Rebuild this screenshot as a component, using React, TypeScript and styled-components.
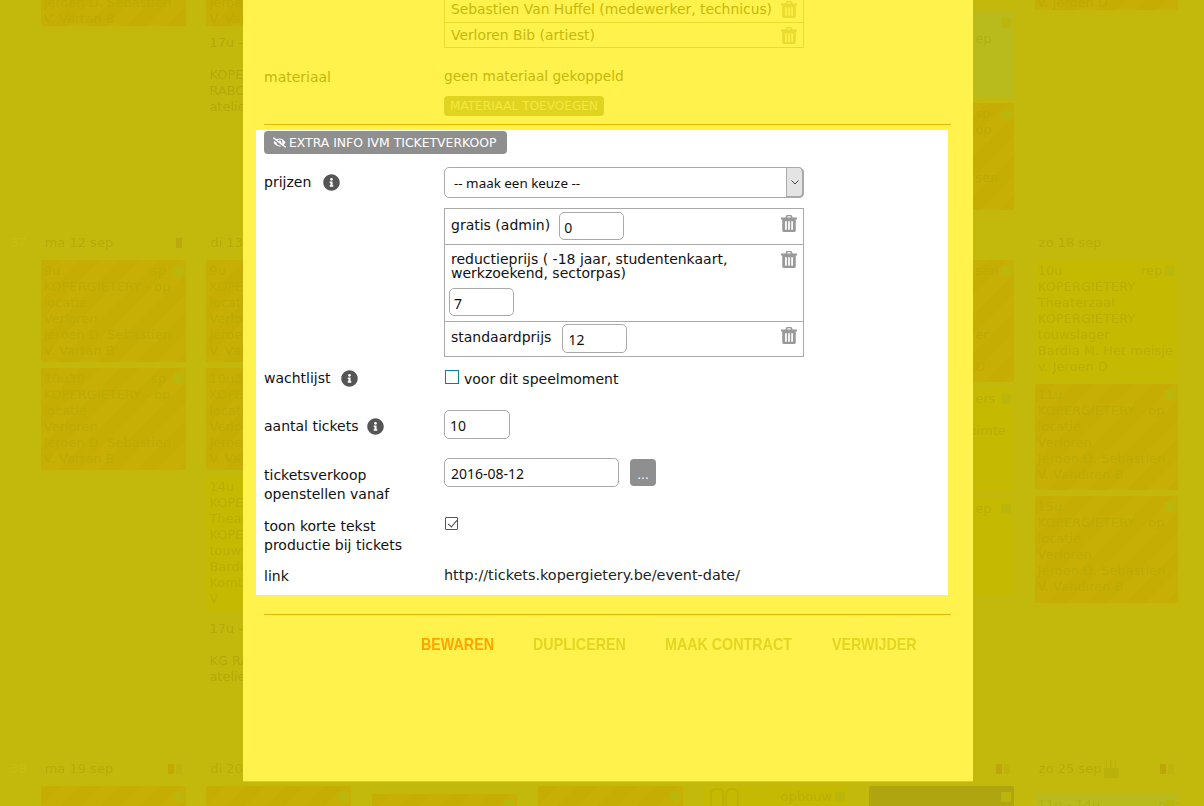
import React from "react";
import styled, { createGlobalStyle } from "styled-components";
import { FaEyeSlash, FaInfoCircle } from "react-icons/fa";

const Global = createGlobalStyle`
  html, body { margin: 0; padding: 0; height: 100%; overflow: hidden; background: #c3b90c; }
  body { font-family: "DejaVu Sans", Verdana, sans-serif; font-size: 14px; }
  * { box-sizing: border-box; }
`;

const Page = styled.div`
  position: relative;
  width: 1204px;
  height: 806px;
  overflow: hidden;
  background: #c3b90c;
`;

/* ---------- dimmed calendar behind the dialog ---------- */
const Calendar = styled.div`
  display: flex;
  flex-direction: column;
  margin-top: -8px;
  color: #b5aa09;
  font-size: 13px;
  line-height: 16px;
`;

const Week = styled.section<{ $height: number }>`
  display: grid;
  grid-template-columns: 20px repeat(6, 145px) 143px;
  column-gap: 20.7px;
  height: ${(p) => p.$height}px;
  align-content: start;
`;

const WeekNo = styled.div`
  padding: 0 0 0 10px;
  color: #c8bd14;
  font-size: 13px;
  line-height: 22px;
  white-space: nowrap;
`;

const Day = styled.div`
  display: flex;
  flex-direction: column;
  min-width: 0;
`;

const DayHead = styled.div`
  display: flex;
  align-items: center;
  gap: 2px;
  height: 22px;
  padding: 0 4px;
  margin-bottom: 6px;
  color: #b6ab0a;
`;

const DayLabel = styled.span`
  flex: none;
  margin-right: auto;
  white-space: nowrap;
  filter: blur(0.3px);
`;

const Flag = styled.i<{ $c: string }>`
  display: block;
  width: 6px;
  height: 10px;
  background: ${(p) => p.$c};
`;

const Cutlery = styled.svg`
  flex: none;
  margin: 0 auto 0 -37px;
`;

const eventInk: Record<string, string> = {
  plain: "#b3a90a",
  orange: "#bcaa05",
  pale: "#b9ae04",
  green: "#aeb016",
  grey: "#a59c10",
};

const eventFill: Record<string, string> = {
  plain: "transparent",
  orange: "repeating-linear-gradient(135deg, #c6ad03 0 14px, #c7af05 14px 28px)",
  pale: "#c5b902",
  green: "#b9bb1c",
  grey: "#aea510",
};

const Event = styled.div<{ $h: number; $tone: string; $mt?: number }>`
  position: relative;
  height: ${(p) => p.$h}px;
  margin: ${(p) => p.$mt ?? 0}px 0 6px;
  padding: 3px 3px;
  border-radius: 2px;
  overflow: hidden;
  white-space: pre;
  color: ${(p) => eventInk[p.$tone]};
  background: ${(p) => eventFill[p.$tone]};
  & > span {
    display: block;
    filter: blur(0.6px);
  }
`;

const Dot = styled.b`
  position: absolute;
  top: 6px;
  right: 3px;
  width: 10px;
  height: 10px;
  background: #bbb60c;
`;

const Rings = styled.svg`
  position: absolute;
  top: 2px;
  left: 7px;
`;

const sp = (n: number) => " ".repeat(n);
const TXT = `9u${sp(22)}sp\nKOPERGIETERY - op\nlocatie\nVerloren\nJeroen D. Sebastien\nV. Vartan B`;
const TXT2 = `10u30${sp(16)}sp\nKOPERGIETERY - op\nlocatie\nVerloren\nJeroen D. Sebastien\nV. Vartan B`;

const Ev = ({
  h,
  tone,
  text,
  mt,
  dot = true,
  children,
}: {
  h: number;
  tone: string;
  text: string;
  mt?: number;
  dot?: boolean;
  children?: React.ReactNode;
}) => (
  <Event $h={h} $tone={tone} $mt={mt}>
    <span>{text}</span>
    {dot && <Dot />}
    {children}
  </Event>
);

const Background = () => (
  <Calendar>
    <Week $height={240}>
      <div />
      <Day>
        <Ev h={34} tone="orange" text={"Jeroen D. Sebastien\nV. Vartan B"} dot={false} />
      </Day>
      <Day>
        <Ev h={34} tone="orange" text={"Jeroen D. Sebastien\nV. Vartan B"} dot={false} />
        <Ev h={100} tone="plain" text={"17u -\n\nKOPERGIETERY\nRABO\natelier"} dot={false} />
      </Day>
      <Day />
      <Day />
      <Day />
      <Day>
        <Ev h={86} tone="green" text={`\n${sp(25)}ep`} mt={20} />
        <Ev h={107} tone="orange" text={`${sp(25)}sp\n${sp(25)}op\n\n\n${sp(25)}sen`} mt={-1} />
      </Day>
      <Day>
        <Ev h={18} tone="orange" text={"v. Jeroen D"} dot={false} />
      </Day>
    </Week>
    <Week $height={526}>
      <WeekNo>37</WeekNo>
      <Day>
        <DayHead><DayLabel>ma 12 sep</DayLabel><Flag $c="#b9a90a" /></DayHead>
        <Ev h={102} tone="orange" text={TXT} />
        <Ev h={102} tone="orange" text={TXT2} />
      </Day>
      <Day>
        <DayHead><DayLabel>di 13 sep</DayLabel></DayHead>
        <Ev h={102} tone="orange" text={TXT} />
        <Ev h={102} tone="orange" text={TXT2} />
        <Ev h={136} tone="pale" text={"14u\nKOPERGIETERY\nTheaterzaal\nKOPERGIETERY\ntouwslager\nBardia M.\nKomt\nV"} />
        <Ev h={100} tone="plain" text={"17u -\n\nKG RABO\natelier"} dot={false} />
      </Day>
      <Day />
      <Day />
      <Day />
      <Day>
        <DayHead><DayLabel>za 17 sep</DayLabel></DayHead>
        <Ev h={122} tone="orange" text={`${sp(25)}sen\n\n\n\n${sp(25)}er\n\n${sp(25)}D`} />
        <Ev h={104} tone="pale" text={`${sp(25)}ers\n\n${sp(22)}ruimte`} />
        <Ev h={98} tone="pale" text={`${sp(25)}ep`} />
      </Day>
      <Day>
        <DayHead><DayLabel>zo 18 sep</DayLabel></DayHead>
        <Ev h={122} tone="pale" text={`10u${sp(19)}rep\nKOPERGIETERY\nTheaterzaal\nKOPERGIETERY\ntouwslager\nBardia M. Het meisje\nv. Jeroen D`} />
        <Ev h={106} tone="orange" text={"11u\nKOPERGIETERY - op\nlocatie\nVerloren\nJeroen D. Sebastien\nV. Vandiren B"} mt={-4} />
        <Ev h={107} tone="orange" text={"15u\nKOPERGIETERY - op\nlocatie\nVerloren\nJeroen D. Sebastien\nV. Vandiren B"} />
      </Day>
    </Week>
    <Week $height={60}>
      <WeekNo>38</WeekNo>
      <Day>
        <DayHead><DayLabel>ma 19 sep</DayLabel><Flag $c="#c4a700" /><Flag $c="#bdb30a" /></DayHead>
        <Ev h={40} tone="orange" text={""} />
      </Day>
      <Day>
        <DayHead><DayLabel>di 20 sep</DayLabel></DayHead>
        <Ev h={40} tone="orange" text={""} />
      </Day>
      <Day>
        <DayHead />
        <Ev h={40} tone="orange" text={""} mt={8} />
      </Day>
      <Day>
        <DayHead />
        <Ev h={40} tone="orange" text={""} />
      </Day>
      <Day>
        <DayHead />
        <Ev h={40} tone="pale" text={`${sp(18)}opbouw`}>
          <Rings width="30" height="22" viewBox="0 0 30 22">
            <rect x="1" y="1" width="12" height="20" rx="5" fill="none" stroke="#bcb005" strokeWidth="2" />
            <rect x="16" y="1" width="12" height="20" rx="5" fill="none" stroke="#bcb005" strokeWidth="2" />
          </Rings>
        </Ev>
      </Day>
      <Day>
        <DayHead><DayLabel>za 24 sep</DayLabel><Flag $c="#bda50a" /><Flag $c="#bdb30a" /></DayHead>
        <Ev h={40} tone="grey" text={""} />
      </Day>
      <Day>
        <DayHead>
          <DayLabel>zo 25 sep</DayLabel>
          <Cutlery width="17" height="18" viewBox="0 0 17 18">
            <path d="M0 18V9l2-1V1h1v7h3V0h2v8h3V1h1v7l3 1v9z" fill="#bab20a" />
          </Cutlery>
          <Flag $c="#bda50a" />
          <Flag $c="#bdb30a" />
        </DayHead>
        <Ev h={40} tone="green" text={`11u - 14u${sp(14)}rep`} mt={8} />
      </Day>
    </Week>
  </Calendar>
);

/* ---------- dialog ---------- */
const Modal = styled.div`
  position: absolute;
  top: 0;
  left: 243px;
  width: 730px;
  height: 782px;
  overflow: hidden;
  padding: 0 22px 0 21px;
  background: #fff24c;
  border-bottom: 1px solid #d9cd1e;
  color: #c4b80c;
`;

const PeopleList = styled.ul`
  list-style: none;
  width: 360px;
  margin: -4px 0 0 180px;
  padding: 0;
  border: 1px solid #e9dd2c;
  border-width: 0 1px 1px;
`;

const PersonRow = styled.li`
  display: flex;
  align-items: center;
  justify-content: space-between;
  height: 26px;
  padding: 0 6px 0;
  border-top: 1px solid #e9dd2c;
  font-size: 13.85px;
  white-space: nowrap;
  &:first-child { border-top: 0; }
  &:last-child { height: 25px; }
`;

const BinSvg = styled.svg<{ $c: string }>`
  display: block;
  flex: none;
  width: 16px;
  height: 17px;
  fill: ${(p) => p.$c};
`;

const Bin = ({ c }: { c: string }) => (
  <BinSvg $c={c} viewBox="1.5 0.8 13 15.7" preserveAspectRatio="none">
    <path
      fillRule="evenodd"
      d="M5 3 L6 .8 H10 L11 3 H14.5 V5 H13.5 V15 A1.5 1.5 0 0 1 12 16.5 H4 A1.5 1.5 0 0 1 2.5 15 V5 H1.5 V3 Z M6.4 3 H9.6 L9.1 1.9 H6.9 Z M4.8 6.5 V14.5 H6.2 V6.5 Z M7.3 6.5 V14.5 H8.7 V6.5 Z M9.8 6.5 V14.5 H11.2 V6.5 Z"
    />
  </BinSvg>
);

const FormRow = styled.div<{ $mt: number }>`
  display: grid;
  grid-template-columns: 180px 360px;
  margin-top: ${(p) => p.$mt}px;
`;

const Label = styled.div<{ $pt?: number; $gap?: number }>`
  display: flex;
  align-items: center;
  gap: ${(p) => p.$gap ?? 11}px;
  align-self: start;
  padding-top: ${(p) => p.$pt ?? 0}px;
  line-height: 19px;
  color: #111;
`;

const StackLabel = styled(Label)`
  display: block;
`;

const MutedLabel = styled(Label)`
  color: #c4b80c;
`;

const Value = styled.div`
  line-height: 16px;
  color: #111;
`;

const MutedValue = styled(Value)`
  color: #c4b80c;
  font-size: 13.7px;
`;

const AddButton = styled.button`
  display: block;
  height: 20px;
  width: 160px;
  margin: 12px 0 0;
  padding: 0;
  border: 0;
  border-radius: 4px;
  background: #e1d420;
  color: #f3e840;
  font: 12.1px "DejaVu Sans", sans-serif;
`;

const Divider = styled.hr<{ $mt: number }>`
  width: 687px;
  height: 1px;
  margin: ${(p) => p.$mt}px 0 0;
  border: 0;
  background: #e8b800;
`;

const Panel = styled.div`
  width: 692px;
  margin: 5px 0 0 -8px;
  padding: 1px 8px 9px;
  background: #fff;
`;

const Toggle = styled.button`
  display: flex;
  align-items: center;
  gap: 3px;
  height: 23px;
  width: 243px;
  padding: 0 0 0 9px;
  border: 0;
  border-radius: 4px;
  background: #8f8f8f;
  color: #fff;
  font: 12.4px "DejaVu Sans", sans-serif;
  white-space: nowrap;
`;

const Info = styled(FaInfoCircle)`
  flex: none;
  width: 17px;
  height: 17px;
  color: #555;
`;

const SelectWrap = styled.div`
  position: relative;
  width: 360px;
  height: 31px;
`;

const Select = styled.select`
  appearance: none;
  display: block;
  width: 100%;
  height: 100%;
  padding: 0 0 0 9px;
  border: 1px solid #aaa;
  border-radius: 5px;
  background: #fff;
  color: #111;
  font: 13.4px "Noto Sans", sans-serif;
`;

const SelectArrow = styled.span`
  position: absolute;
  top: 1px;
  right: 0;
  bottom: 0;
  width: 18px;
  display: flex;
  align-items: center;
  justify-content: center;
  background: #e4e4e4;
  border-left: 1px solid #aaa;
  border-right: 2px solid #aaa;
  border-bottom: 2px solid #aaa;
  border-radius: 0 5px 5px 0;
`;

const PriceTable = styled.div`
  grid-column: 2;
  width: 360px;
  border: 1px solid #aaa;
`;

const PriceRow = styled.div<{ $h: number; $pt?: number }>`
  display: flex;
  justify-content: space-between;
  height: ${(p) => p.$h}px;
  padding: ${(p) => p.$pt ?? 3}px 6px 0;
  & + & { border-top: 1px solid #aaa; }
`;

const PriceMain = styled.div<{ $gap: number }>`
  display: flex;
  align-items: flex-start;
  gap: ${(p) => p.$gap}px;
  color: #111;
`;

const PriceStack = styled.div`
  width: 300px;
  padding-top: 4px;
  line-height: 14px;
  color: #111;
`;

const PriceText = styled.span`
  padding-top: 5px;
  line-height: 16px;
`;

const Num = styled.input<{ $w: number; $h?: number; $ml?: number; $mt?: number; $pl?: number }>`
  display: block;
  width: ${(p) => p.$w}px;
  height: ${(p) => p.$h ?? 29}px;
  margin: ${(p) => p.$mt ?? 0}px 0 0 ${(p) => p.$ml ?? 0}px;
  padding: 2px 4px 0 ${(p) => p.$pl ?? 4}px;
  border: 1px solid #aaa;
  border-radius: 5px;
  background: #fff;
  color: #111;
  font: 14px "Noto Sans", sans-serif;
`;

const BinButton = styled.span`
  display: block;
  padding-top: 3px;
`;

const CheckLine = styled.label`
  display: flex;
  align-items: center;
  align-self: start;
  gap: 5px;
  height: 19px;
  color: #111;
`;

const WaitBox = styled.input`
  appearance: none;
  width: 14px;
  height: 14px;
  margin: 0 0 4px 1px;
  border: 1px solid #0b7ea3;
  background: #fff;
`;

const TickBox = styled.input`
  appearance: none;
  position: relative;
  display: block;
  width: 13px;
  height: 13px;
  margin: 0 0 0 1px;
  border: 1px solid #555;
  border-radius: 1px;
  background: #fff;
  &::after {
    content: "";
    position: absolute;
    left: 3.5px;
    top: 0;
    width: 4px;
    height: 8px;
    border: solid #444;
    border-width: 0 1px 1px 0;
    transform: rotate(40deg);
  }
`;

const DateLine = styled.div`
  display: flex;
  align-items: center;
  align-self: start;
  gap: 11px;
`;

const DotsButton = styled.button`
  width: 26px;
  height: 27px;
  padding: 4px 0 0;
  border: 0;
  border-radius: 4px;
  background: #8f8f8f;
  color: #fff;
  font: 12px "DejaVu Sans", sans-serif;
`;

const LinkText = styled.span`
  font-size: 14.4px;
  color: #222;
`;

const Actions = styled.div`
  display: flex;
  gap: 39px;
  margin: 21px 0 0 157px;
`;

const Action = styled.a<{ $primary?: boolean; $w: number }>`
  display: block;
  width: ${(p) => p.$w}px;
  font: bold 17px/18px "Liberation Sans", sans-serif;
  white-space: nowrap;
  transform: scaleX(0.84);
  transform-origin: left center;
  color: ${(p) => (p.$primary ? "#ffa500" : "#e3d620")};
`;

const Dialog = () => (
  <Modal>
    <PeopleList>
      <PersonRow>Sebastien Van Huffel (medewerker, technicus)<Bin c="#e9dc2e" /></PersonRow>
      <PersonRow>Verloren Bib (artiest)<Bin c="#e9dc2e" /></PersonRow>
    </PeopleList>
    <FormRow $mt={20}>
      <MutedLabel>materiaal</MutedLabel>
      <div>
        <MutedValue>geen materiaal gekoppeld</MutedValue>
        <AddButton>MATERIAAL TOEVOEGEN</AddButton>
      </div>
    </FormRow>
    <Divider $mt={8} />
    <Panel>
      <Toggle><FaEyeSlash size={13} /> EXTRA INFO IVM TICKETVERKOOP</Toggle>
      <FormRow $mt={13}>
        <Label $pt={6} $gap={12}>prijzen <Info /></Label>
        <SelectWrap>
          <Select defaultValue="">
            <option value="">-- maak een keuze --</option>
          </Select>
          <SelectArrow>
            <svg width="8" height="5" viewBox="0 0 8 5"><path d="M0.5 0.5 4 4 7.5 0.5" fill="none" stroke="#444" /></svg>
          </SelectArrow>
        </SelectWrap>
      </FormRow>
      <FormRow $mt={10}>
        <PriceTable>
          <PriceRow $h={35}>
            <PriceMain $gap={9}><PriceText>gratis (admin)</PriceText><Num $w={65} $h={28} defaultValue="0" /></PriceMain>
            <BinButton><Bin c="#999" /></BinButton>
          </PriceRow>
          <PriceRow $h={77}>
            <PriceStack>
              reductieprijs ( -18 jaar, studentenkaart, werkzoekend, sectorpas)
              <Num $w={65} $h={28} $ml={-2} $mt={8} defaultValue="7" />
            </PriceStack>
            <BinButton><Bin c="#999" /></BinButton>
          </PriceRow>
          <PriceRow $h={35} $pt={2}>
            <PriceMain $gap={11}><PriceText>standaardprijs</PriceText><Num $w={65} $pl={5} defaultValue="12" /></PriceMain>
            <BinButton><Bin c="#999" /></BinButton>
          </PriceRow>
        </PriceTable>
      </FormRow>
      <FormRow $mt={12}>
        <Label $gap={10}>wachtlijst <Info /></Label>
        <CheckLine><WaitBox type="checkbox" /> voor dit speelmoment</CheckLine>
      </FormRow>
      <FormRow $mt={22}>
        <Label $pt={7} $gap={8}>aantal tickets <Info /></Label>
        <Num $w={66} $pl={5} defaultValue="10" />
      </FormRow>
      <FormRow $mt={19}>
        <StackLabel $pt={8}>ticketsverkoop<br />openstellen vanaf</StackLabel>
        <DateLine>
          <Num $w={175} $pl={6} defaultValue="2016-08-12" />
          <DotsButton>...</DotsButton>
        </DateLine>
      </FormRow>
      <FormRow $mt={13}>
        <StackLabel>toon korte tekst<br />productie bij tickets</StackLabel>
        <TickBox type="checkbox" defaultChecked />
      </FormRow>
      <FormRow $mt={12}>
        <Label>link</Label>
        <Value><LinkText>http://tickets.kopergietery.be/event-date/</LinkText></Value>
      </FormRow>
    </Panel>
    <Divider $mt={19} />
    <Actions>
      <Action $primary $w={73}>BEWAREN</Action>
      <Action $w={93}>DUPLICEREN</Action>
      <Action $w={128}>MAAK CONTRACT</Action>
      <Action $w={82}>VERWIJDER</Action>
    </Actions>
  </Modal>
);

export default function App() {
  return (
    <Page>
      <Global />
      <Background />
      <Dialog />
    </Page>
  );
}
